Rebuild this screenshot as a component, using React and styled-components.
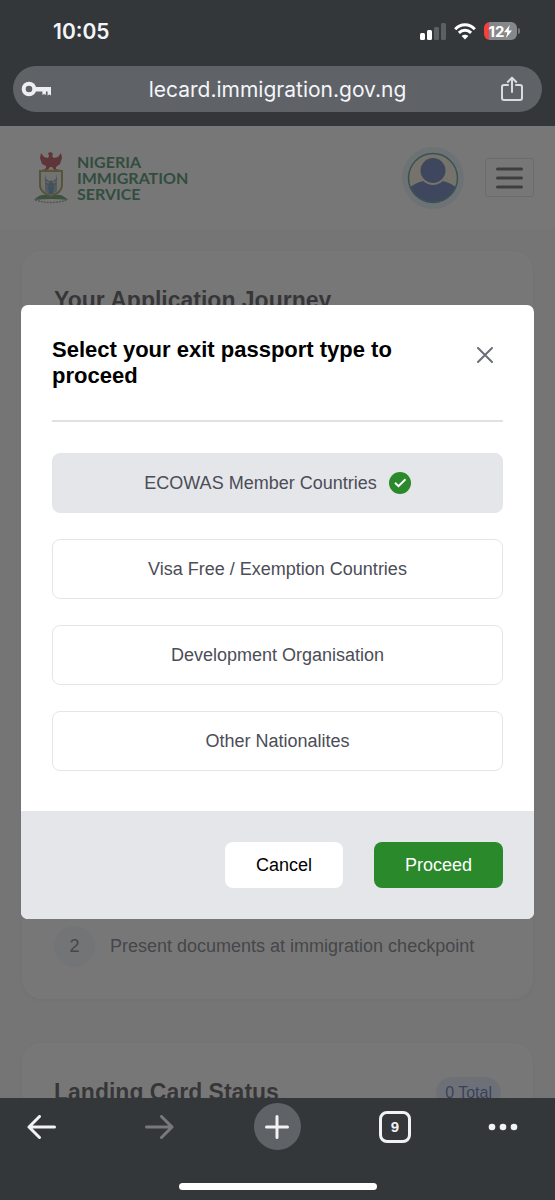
import React, { useState } from "react";
import styled, { createGlobalStyle } from "styled-components";

const GlobalStyle = createGlobalStyle`
  * {
    box-sizing: border-box;
  }

  body {
    margin: 0;
    font-family: "Liberation Sans", Arial, sans-serif;
  }

  button {
    padding: 0;
    border: 0;
    background: none;
    color: inherit;
    font: inherit;
    cursor: pointer;
  }

  svg {
    display: block;
    flex-shrink: 0;
  }
`;

const Phone = styled.div`
  display: grid;
  grid-template-rows: auto 1fr auto;
  height: 100vh;
  overflow: hidden;
`;

const BrowserHeader = styled.header`
  padding: 0 13px 14px;
  background-color: #34373a;
  color: #f4f5f9;
  font-family: Inter, sans-serif;
`;

const StatusBar = styled.div`
  display: flex;
  align-items: center;
  justify-content: space-between;
  height: 66px;
  padding: 0 22px 4px 40px;
`;

const Clock = styled.time`
  font-size: 21px;
  font-weight: 600;
`;

const StatusIcons = styled.div`
  display: flex;
  align-items: center;
  gap: 8px;
`;

const Battery = styled.div`
  display: flex;
  align-items: center;
`;

const BatteryLevel = styled.div`
  display: flex;
  align-items: center;
  justify-content: center;
  width: 33px;
  height: 18px;
  border-radius: 6px;
  background: linear-gradient(to right, #f5413a 5px, #85878a 5px);
  color: #ffffff;
  font-size: 15px;
  font-weight: 700;
`;

const BatteryCap = styled.div`
  width: 2px;
  height: 6px;
  margin-left: 1px;
  border-radius: 0 2px 2px 0;
  background-color: #75777a;
`;

const AddressBar = styled.div`
  display: grid;
  grid-template-columns: 1fr auto 1fr;
  align-items: center;
  height: 46px;
  padding: 0 8px;
  border-radius: 23px;
  background-color: #5f6367;
`;

const Address = styled.button`
  font-size: 21px;
`;

const ShareButton = styled.button`
  justify-self: end;
  padding-right: 11px;
`;

const Viewport = styled.div`
  position: relative;
  min-height: 0;
  overflow: hidden;
  background-color: #f7f7f7;
`;

const SiteHeader = styled.header`
  display: flex;
  align-items: center;
  height: 103px;
  padding: 0 21px 0 34px;
  background-color: #ffffff;
`;

const Brand = styled.a`
  display: flex;
  align-items: center;
  gap: 9px;
  margin-right: auto;
  color: #006a35;
  font-family: Lato, sans-serif;
  font-size: 16px;
  font-weight: 700;
  line-height: 16px;
  text-decoration: none;
`;

const AvatarButton = styled.button`
  margin-right: 21px;
`;

const MenuButton = styled.button`
  display: flex;
  align-items: center;
  justify-content: center;
  width: 49px;
  height: 39px;
  border: 1px solid #d5d5d8;
  border-radius: 3px;
`;

const Cards = styled.main`
  display: flex;
  flex-direction: column;
  gap: 44px;
  padding: 22px;
`;

const Card = styled.section`
  display: flex;
  flex-direction: column;
  justify-content: space-between;
  min-height: ${({ $tall }) => ($tall ? "748px" : "300px")};
  padding: 32px;
  border-radius: 20px;
  background-color: #ffffff;
  box-shadow: 0 1px 4px rgba(0, 0, 0, 0.08);
`;

const CardHeader = styled.div`
  display: flex;
  align-items: center;
  justify-content: space-between;
`;

const CardTitle = styled.h2`
  margin: 0;
  color: #17181f;
  font-size: 23px;
  line-height: 34px;
`;

const Badge = styled.span`
  padding: 0 9px;
  border-radius: 16px;
  background-color: #dbeafe;
  color: #1e3a9f;
  font-size: 16px;
  line-height: 31px;
`;

const Step = styled.div`
  display: flex;
  align-items: center;
  gap: 15px;
  color: #4b4f5a;
  font-size: 18px;
`;

const StepNumber = styled.span`
  width: 41px;
  border-radius: 50%;
  background-color: #f1f2f8;
  line-height: 41px;
  text-align: center;
`;

const Overlay = styled.div`
  position: absolute;
  inset: 0;
  display: flex;
  align-items: center;
  padding: 0 21px;
  background-color: rgba(66, 66, 66, 0.72);
`;

const Dialog = styled.form`
  width: 100%;
  border-radius: 7px;
  overflow: hidden;
  background-color: #ffffff;
`;

const DialogBody = styled.div`
  padding: 32px 31px 40px;
`;

const DialogHeader = styled.div`
  display: flex;
  align-items: flex-start;
  justify-content: space-between;
  padding-bottom: 31px;
  border-bottom: 2px solid #e0e1e4;
`;

const DialogTitle = styled.h1`
  max-width: 360px;
  margin: 0;
  color: #000000;
  font-size: 22px;
  line-height: 26px;
`;

const CloseButton = styled.button`
  padding: 10px;
  color: #6b6e76;
`;

const Options = styled.div`
  display: grid;
  gap: 26px;
  padding-top: 31px;
`;

const Option = styled.button`
  display: flex;
  align-items: center;
  justify-content: center;
  gap: 12px;
  height: 60px;
  border: 1px solid #e4e5e9;
  border-radius: 8px;
  background-color: ${({ $selected }) => ($selected ? "#e5e6ea" : "#ffffff")};
  color: #4b4d57;
  font-size: 18px;
`;

const DialogFooter = styled.div`
  display: flex;
  justify-content: flex-end;
  gap: 31px;
  padding: 31px;
  background-color: #e5e6ea;
`;

const ActionButton = styled.button`
  height: 46px;
  padding: 0 31px;
  border-radius: 8px;
  background-color: ${({ $primary }) => ($primary ? "#2a892b" : "#ffffff")};
  color: ${({ $primary }) => ($primary ? "#ffffff" : "#000000")};
  font-size: 18px;
`;

const BrowserToolbar = styled.footer`
  display: flex;
  flex-direction: column;
  align-items: center;
  justify-content: space-between;
  height: 102px;
  padding: 5px 0 10px;
  background-color: #34373a;
  color: #f1f2f6;
`;

const ToolbarButtons = styled.nav`
  display: grid;
  grid-template-columns: 73fr 118fr 118fr 118fr 64fr;
  align-items: center;
  justify-items: center;
  width: 100%;
  padding: 0 37px 0 27px;

  > :first-child {
    justify-self: start;
  }

  > :last-child {
    justify-self: end;
  }
`;

const ToolbarButton = styled.button`
  color: ${({ $dimmed }) => ($dimmed ? "#77797b" : "inherit")};
`;

const NewTabButton = styled(ToolbarButton)`
  display: flex;
  align-items: center;
  justify-content: center;
  width: 47px;
  height: 47px;
  border-radius: 50%;
  background-color: #5f6367;
`;

const TabsButton = styled(ToolbarButton)`
  width: 32px;
  height: 32px;
  border: 3px solid #f1f2f6;
  border-radius: 8px;
  font-size: 15px;
  font-weight: 700;
`;

const HomeIndicator = styled.div`
  width: 198px;
  height: 7px;
  border-radius: 4px;
  background-color: #ffffff;
`;

const SignalIcon = () => (
  <svg width="26" height="17" viewBox="0 0 26 17" fill="#ffffff">
    <rect x="0" y="10" width="5" height="7" rx="1.5" />
    <rect x="7" y="7" width="5" height="10" rx="1.5" />
    <rect x="14" y="4" width="5" height="13" rx="1.5" fill="#5d6063" />
    <rect x="21" y="0" width="5" height="17" rx="1.5" fill="#5d6063" />
  </svg>
);

const WifiIcon = () => (
  <svg width="22" height="17" viewBox="0 0 22 17" fill="none" stroke="#ffffff" strokeWidth="3">
    <path d="M1.2 6.2C6.7 .4 15.3 .4 20.8 6.2" />
    <path d="M4.9 9.9C8.3 6.4 13.7 6.4 17.1 9.9" />
    <path d="M7.6 13.1C9.5 11.2 12.5 11.2 14.4 13.1L11 16.5Z" fill="#ffffff" stroke="none" />
  </svg>
);

const BoltIcon = () => (
  <svg width="8" height="13" viewBox="0 0 8 13" fill="#ffffff">
    <path d="M5.8 0L0 7.2H3.4L2 13L8 5.6H4.5Z" />
  </svg>
);

const KeyIcon = () => (
  <svg width="30" height="16" viewBox="0 0 30 16">
    <circle cx="8" cy="8" r="5.3" fill="none" stroke="#eceef4" strokeWidth="4" />
    <path d="M14 6H30V14.5L28.3 13.5L26.6 14.5V10.5H25L24.8 14L23 13L21.4 14V10.5H14Z" fill="#eceef4" />
  </svg>
);

const ShareIcon = () => (
  <svg width="22" height="26" viewBox="0 0 22 26" fill="none" stroke="#d8dbe2" strokeWidth="2" strokeLinecap="round" strokeLinejoin="round">
    <path d="M7 9H3Q1 9 1 11V22Q1 24 3 24H19Q21 24 21 22V11Q21 9 19 9H15" />
    <path d="M11 16V2M6.8 6L11 1.6L15.2 6" />
  </svg>
);

const CoatOfArms = () => (
  <svg width="34" height="52" viewBox="0 0 34 52">
    <path d="M2 46Q7 42 11 43H23Q27 42 32 46L34 48Q17 46 0 48Z" fill="#2d7a3c" />
    <path d="M1 48Q17 53 33 48" fill="none" stroke="#8b8770" strokeWidth="1.5" strokeDasharray="2 1" />
    <path d="M6 19H28V34Q27 41 17 44Q7 41 6 34Z" fill="#eeeee5" stroke="#8b812a" strokeWidth="2" />
    <path d="M11 22V39L15 42V34L13 30ZM23 22V39L19 42V34L21 30Z" fill="#779cae" />
    <path d="M17 28L20 32L19 42H15L14 32Z" fill="#2876b1" />
    <path d="M11 27L17 31L23 27M12 31L17 35L22 31" fill="none" stroke="#777777" strokeWidth="1.5" />
    <path d="M14 1L17 0L19 2L18 4L20 6L24 5L27 1L28 6L26 12L22 15V17L25 18L21 19L18 15H16L13 19L9 18L12 16V14L8 12L6 6L7 1L10 5L14 6L15 4Z" fill="#a51422" />
    <path d="M8 18H26" stroke="#bb9b29" strokeWidth="1" />
  </svg>
);

const AvatarIcon = () => (
  <svg width="62" height="62" viewBox="0 0 62 62">
    <clipPath id="avatar-clip">
      <circle cx="31" cy="31" r="24" />
    </clipPath>
    <circle cx="31" cy="31" r="31" fill="#dcecf5" />
    <circle cx="31" cy="31" r="24.5" fill="#f8f1d8" stroke="#227b72" strokeWidth="1.5" />
    <g clipPath="url(#avatar-clip)" fill="#3555a5">
      <path d="M7 41Q13 36 21 34Q31 42 41 34Q49 36 55 41V57H7Z" />
      <circle cx="31" cy="23.5" r="12.5" />
    </g>
  </svg>
);

const MenuIcon = () => (
  <svg width="27" height="22" viewBox="0 0 27 22" stroke="#35353f" strokeWidth="3" strokeLinecap="round">
    <path d="M1.5 2H25.5M1.5 11H25.5M1.5 20H25.5" />
  </svg>
);

const CloseIcon = () => (
  <svg width="16" height="16" viewBox="0 0 16 16" stroke="currentColor" strokeWidth="2" strokeLinecap="round">
    <path d="M1 1L15 15M15 1L1 15" />
  </svg>
);

const CheckIcon = () => (
  <svg width="22" height="22" viewBox="0 0 22 22" fill="none">
    <circle cx="11" cy="11" r="11" fill="#2a892b" />
    <path d="M6 10.8L9.5 14.2L16.5 7.2" stroke="#ffffff" strokeWidth="2" />
  </svg>
);

const ArrowIcon = ({ forward }) => (
  <svg width="29" height="24" viewBox="0 0 29 24" fill="none" stroke="currentColor" strokeWidth="3" strokeLinecap="round" strokeLinejoin="round">
    <path d={forward ? "M1.5 12H27M16.5 1.5L27 12L16.5 22.5" : "M27.5 12H2M12.5 1.5L2 12L12.5 22.5"} />
  </svg>
);

const PlusIcon = () => (
  <svg width="24" height="24" viewBox="0 0 24 24" stroke="currentColor" strokeWidth="3" strokeLinecap="round">
    <path d="M12 1.5V22.5M1.5 12H22.5" />
  </svg>
);

const MoreIcon = () => (
  <svg width="30" height="8" viewBox="0 0 30 8" fill="currentColor">
    <circle cx="4" cy="4" r="3.3" />
    <circle cx="15" cy="4" r="3.3" />
    <circle cx="26" cy="4" r="3.3" />
  </svg>
);

const passportTypes = [
  "ECOWAS Member Countries",
  "Visa Free / Exemption Countries",
  "Development Organisation",
  "Other Nationalites"
];

const PassportDialog = () => {
  const [selected, setSelected] = useState(passportTypes[0]);

  return (
    <Dialog role="dialog" aria-labelledby="dialog-title" onSubmit={e => e.preventDefault()}>
      <DialogBody>
        <DialogHeader>
          <DialogTitle id="dialog-title">Select your exit passport type to proceed</DialogTitle>
          <CloseButton type="button" aria-label="Close">
            <CloseIcon />
          </CloseButton>
        </DialogHeader>
        <Options>
          {passportTypes.map(type => (
            <Option
              key={type}
              type="button"
              aria-pressed={type === selected}
              $selected={type === selected}
              onClick={() => setSelected(type)}
            >
              {type}
              {type === selected && <CheckIcon />}
            </Option>
          ))}
        </Options>
      </DialogBody>
      <DialogFooter>
        <ActionButton type="button">Cancel</ActionButton>
        <ActionButton type="submit" $primary>
          Proceed
        </ActionButton>
      </DialogFooter>
    </Dialog>
  );
};

const App = () => (
  <>
    <GlobalStyle />
    <Phone>
      <BrowserHeader>
        <StatusBar>
          <Clock>10:05</Clock>
          <StatusIcons>
            <SignalIcon />
            <WifiIcon />
            <Battery>
              <BatteryLevel>
                12
                <BoltIcon />
              </BatteryLevel>
              <BatteryCap />
            </Battery>
          </StatusIcons>
        </StatusBar>
        <AddressBar>
          <KeyIcon />
          <Address type="button">lecard.immigration.gov.ng</Address>
          <ShareButton type="button" aria-label="Share">
            <ShareIcon />
          </ShareButton>
        </AddressBar>
      </BrowserHeader>

      <Viewport>
        <SiteHeader>
          <Brand href="#">
            <CoatOfArms />
            <span>
              NIGERIA
              <br />
              IMMIGRATION
              <br />
              SERVICE
            </span>
          </Brand>
          <AvatarButton type="button" aria-label="Account">
            <AvatarIcon />
          </AvatarButton>
          <MenuButton type="button" aria-label="Menu">
            <MenuIcon />
          </MenuButton>
        </SiteHeader>
        <Cards>
          <Card $tall>
            <CardTitle>Your Application Journey</CardTitle>
            <Step>
              <StepNumber>2</StepNumber>
              Present documents at immigration checkpoint
            </Step>
          </Card>
          <Card>
            <CardHeader>
              <CardTitle>Landing Card Status</CardTitle>
              <Badge>0 Total</Badge>
            </CardHeader>
          </Card>
        </Cards>
        <Overlay>
          <PassportDialog />
        </Overlay>
      </Viewport>

      <BrowserToolbar>
        <ToolbarButtons>
          <ToolbarButton type="button" aria-label="Back">
            <ArrowIcon />
          </ToolbarButton>
          <ToolbarButton type="button" aria-label="Forward" $dimmed>
            <ArrowIcon forward />
          </ToolbarButton>
          <NewTabButton type="button" aria-label="New tab">
            <PlusIcon />
          </NewTabButton>
          <TabsButton type="button">9</TabsButton>
          <ToolbarButton type="button" aria-label="More">
            <MoreIcon />
          </ToolbarButton>
        </ToolbarButtons>
        <HomeIndicator />
      </BrowserToolbar>
    </Phone>
  </>
);

export default App;
